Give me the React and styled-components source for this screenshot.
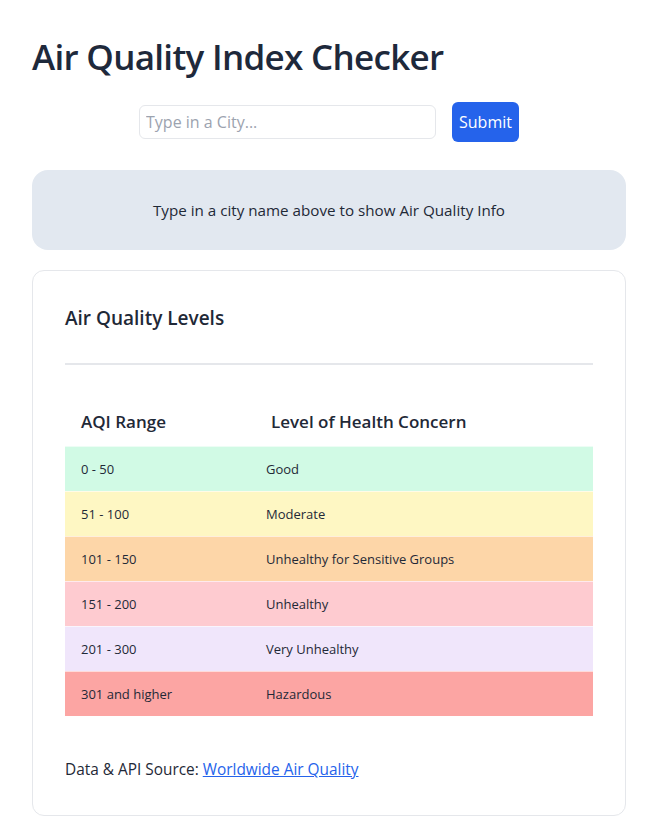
import React, { useState } from "react";
import styled, { createGlobalStyle } from "styled-components";

const GlobalStyle = createGlobalStyle`
  html, body {
    margin: 0;
    padding: 0;
    background: #fff;
  }
  body {
    font-family: "Open Sans", "Noto Sans", sans-serif;
    color: #1f2937;
  }
  * {
    box-sizing: border-box;
  }
`;

const levels = [
  { range: "0 - 50", concern: "Good", color: "#d1fae5" },
  { range: "51 - 100", concern: "Moderate", color: "#fef7c3" },
  { range: "101 - 150", concern: "Unhealthy for Sensitive Groups", color: "#fdd6a8" },
  { range: "151 - 200", concern: "Unhealthy", color: "#fecbd0" },
  { range: "201 - 300", concern: "Very Unhealthy", color: "#f0e6fb" },
  { range: "301 and higher", concern: "Hazardous", color: "#fca5a3" },
];

export default function App() {
  const [city, setCity] = useState("");

  return (
    <Page>
      <GlobalStyle />
      <Title>Air Quality Index Checker</Title>
      <SearchRow onSubmit={(e) => e.preventDefault()}>
        <CityInput
          type="text"
          placeholder="Type in a City..."
          value={city}
          onChange={(e) => setCity(e.target.value)}
        />
        <SubmitButton type="submit">Submit</SubmitButton>
      </SearchRow>

      <InfoBox>Type in a city name above to show Air Quality Info</InfoBox>

      <Card>
        <CardTitle>Air Quality Levels</CardTitle>
        <Divider />
        <Table>
          <HeadRow>
            <HeadCell>AQI Range</HeadCell>
            <HeadCell $second>Level of Health Concern</HeadCell>
          </HeadRow>
          {levels.map((lvl) => (
            <Row key={lvl.range} $bg={lvl.color}>
              <Cell>{lvl.range}</Cell>
              <Cell>{lvl.concern}</Cell>
            </Row>
          ))}
        </Table>
        <Source>
          Data &amp; API Source: <SourceLink href="#">Worldwide Air Quality</SourceLink>
        </Source>
      </Card>
    </Page>
  );
}

const Page = styled.div`
  padding: 32px 28px 13px 32px;
  display: flex;
  flex-direction: column;
`;

const Title = styled.h1`
  margin: 4px 0 24px 0;
  font-size: 35px;
  line-height: 42px;
  font-weight: 600;
  letter-spacing: -0.7px;
  color: #1e293b;
`;

const SearchRow = styled.form`
  display: flex;
  justify-content: center;
  align-items: center;
  gap: 16px;
  margin: 0;
`;

const CityInput = styled.input`
  width: 297px;
  height: 34px;
  padding: 0 6px;
  font-family: inherit;
  font-size: 16px;
  color: #1f2937;
  border: 1px solid #e5e7eb;
  border-radius: 6px;
  outline: none;

  &::placeholder {
    color: #9ca3af;
  }
`;

const SubmitButton = styled.button`
  height: 40px;
  padding: 0 7px;
  font-family: inherit;
  font-size: 16px;
  color: #fff;
  background: #2563eb;
  border: none;
  border-radius: 6px;
  cursor: pointer;
`;

const InfoBox = styled.div`
  margin-top: 28px;
  height: 80px;
  display: flex;
  align-items: center;
  justify-content: center;
  background: #e2e8f0;
  border-radius: 16px;
  font-size: 15.2px;
  color: #1f2937;
`;

const Card = styled.section`
  margin-top: 20px;
  padding: 32px 32px 33px 32px;
  border: 1px solid #e5e7eb;
  border-radius: 12px;
`;

const CardTitle = styled.h2`
  margin: 0;
  font-size: 19px;
  line-height: 30px;
  font-weight: 600;
  color: #1f2937;
`;

const Divider = styled.hr`
  margin: 30px 0 0 0;
  border: none;
  height: 2px;
  background: #e5e7eb;
`;

const Table = styled.div`
  margin-top: 32px;
  display: flex;
  flex-direction: column;
`;

const HeadRow = styled.div`
  display: grid;
  grid-template-columns: 185px 1fr;
  height: 49px;
  align-items: center;
`;

const HeadCell = styled.div`
  padding-left: ${({ $second }) => ($second ? "21px" : "16px")};
  font-size: 17px;
  font-weight: 600;
  color: #1f2937;
`;

const Row = styled.div`
  display: grid;
  grid-template-columns: 185px 1fr;
  height: 45px;
  align-items: center;
  background: ${({ $bg }) => $bg};
  border-top: 1px solid rgba(255, 255, 255, 0.6);

  &:first-of-type {
    border-top: none;
  }
`;

const Cell = styled.div`
  padding-left: 16px;
  font-size: 13px;
  color: #1f2937;
`;

const Source = styled.p`
  margin: 42px 0 0 0;
  font-size: 15.4px;
  line-height: 24px;
  color: #1f2937;
`;

const SourceLink = styled.a`
  color: #2563eb;
  text-decoration: underline;
`;
